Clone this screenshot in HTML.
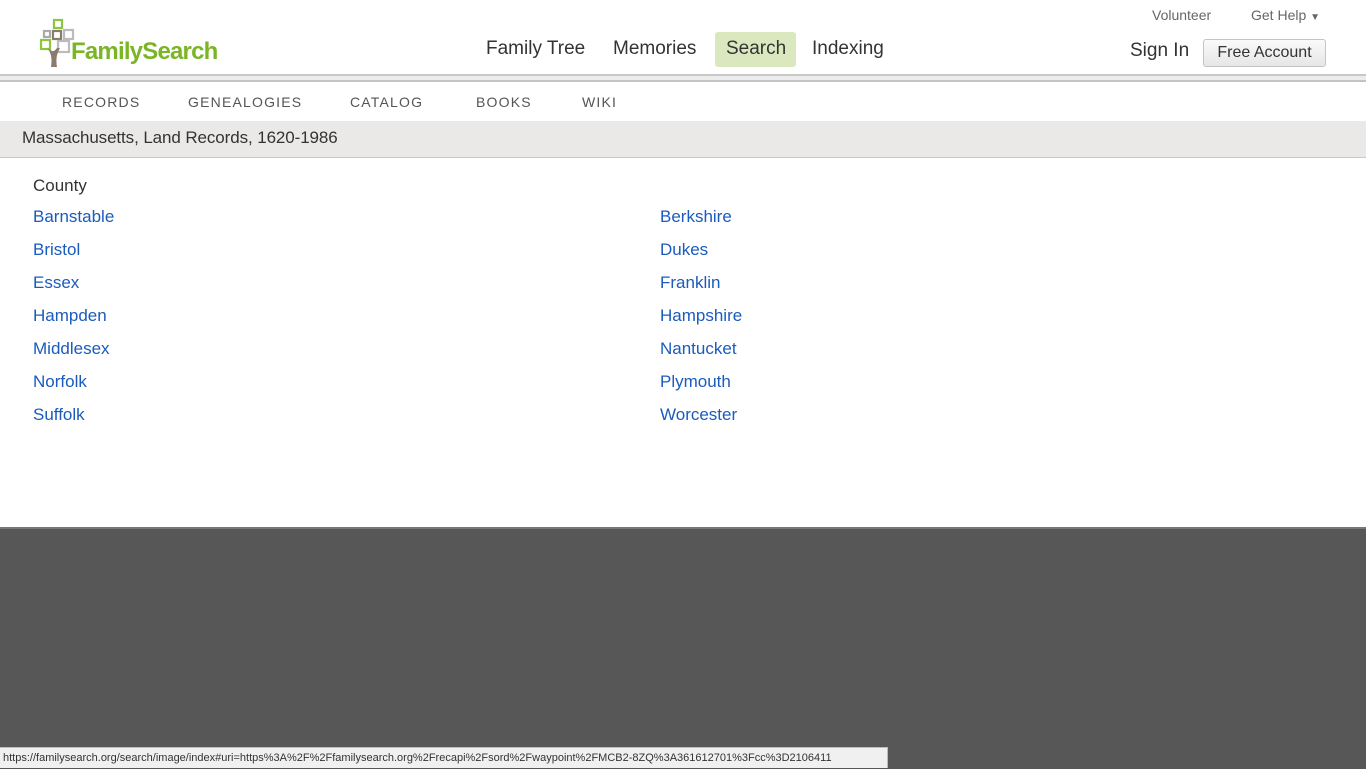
<!DOCTYPE html>
<html><head><style>
body{margin:0;width:1366px;height:768px;overflow:hidden;font-family:"Liberation Sans",sans-serif;background:#575757;position:relative}
.top{position:absolute;left:0;top:0;width:1366px;height:74px;background:#fff}
.a{position:absolute;white-space:nowrap}
.l{color:#1a5bbd;font-size:17px}
</style></head><body>
<div class="top"></div>
<div class="a" style="top:74px;left:0;width:1366px;height:2px;background:#c8c8c8"></div>
<div class="a" style="top:76px;left:0;width:1366px;height:4px;background:#ececec"></div>
<div class="a" style="top:80px;left:0;width:1366px;height:2px;background:#c4c4c4"></div>
<div class="a" style="top:82px;left:0;width:1366px;height:446px;background:#fff"></div>
<div class="a" style="top:121px;left:0;width:1366px;height:36px;background:#ebe9e7;border-bottom:1px solid #c9c9c9"></div>
<div class="a" style="top:527px;left:0;width:1366px;height:2px;background:#777"></div>
<!-- logo -->
<svg class="a" style="left:38px;top:18px" width="40" height="50" viewBox="0 0 40 50">
<rect x="16" y="2" width="8" height="8" fill="none" stroke="#8cc63f" stroke-width="2.2"/>
<rect x="6" y="13" width="6" height="6" fill="none" stroke="#aaa" stroke-width="2.2"/>
<rect x="15" y="13" width="8" height="8" fill="none" stroke="#8a7b6a" stroke-width="2.2"/>
<rect x="26" y="12" width="9" height="9" fill="none" stroke="#bbb" stroke-width="2.2"/>
<rect x="3" y="22" width="9" height="9" fill="none" stroke="#8cc63f" stroke-width="2.2"/>
<rect x="20" y="23" width="11" height="11" fill="none" stroke="#bbb" stroke-width="2.2"/>
<path d="M9 30 Q15 36 13 49 L19 49 Q17 38 22 30 L19 30 Q16 34 14 33 Z" fill="#8a7b6a"/>
</svg>
<div class="a" style="left:71px;top:38px;font-size:24px;font-weight:bold;color:#7ab526;letter-spacing:-0.8px">FamilySearch</div>
<div class="a" style="left:486px;top:38px;font-size:19px;color:#333">Family Tree</div>
<div class="a" style="left:613px;top:38px;font-size:19px;color:#333">Memories</div>
<div class="a" style="left:715px;top:32px;width:81px;height:35px;background:#dbe8bf;border-radius:3px"></div>
<div class="a" style="left:726px;top:38px;font-size:19px;color:#333">Search</div>
<div class="a" style="left:812px;top:38px;font-size:19px;color:#333">Indexing</div>
<div class="a" style="left:1152px;top:7px;font-size:14px;color:#666">Volunteer</div>
<div class="a" style="left:1251px;top:7px;font-size:14px;color:#666">Get Help <span style="font-size:10px">▼</span></div>
<div class="a" style="left:1130px;top:40px;font-size:19px;color:#333">Sign In</div>
<div class="a" style="left:1203px;top:39px;width:121px;height:26px;border:1px solid #c4c4c4;border-radius:3px;background:linear-gradient(#fafafa,#e6e6e6);font-size:16px;color:#333;text-align:center;line-height:26px">Free Account</div>
<div class="a" style="top:94px;left:62px;font-size:14px;letter-spacing:1.2px;color:#555">RECORDS</div>
<div class="a" style="top:94px;left:188px;font-size:14px;letter-spacing:1.2px;color:#555">GENEALOGIES</div>
<div class="a" style="top:94px;left:350px;font-size:14px;letter-spacing:1.2px;color:#555">CATALOG</div>
<div class="a" style="top:94px;left:476px;font-size:14px;letter-spacing:1.2px;color:#555">BOOKS</div>
<div class="a" style="top:94px;left:582px;font-size:14px;letter-spacing:1.2px;color:#555">WIKI</div>
<div class="a" style="top:128px;left:22px;font-size:17px;color:#333;letter-spacing:-0.1px">Massachusetts, Land Records, 1620-1986</div>
<div class="a" style="top:176px;left:33px;font-size:17px;color:#333">County</div>
<div class="a l" style="top:207px;left:33px">Barnstable</div><div class="a l" style="top:207px;left:660px">Berkshire</div>
<div class="a l" style="top:240px;left:33px">Bristol</div><div class="a l" style="top:240px;left:660px">Dukes</div>
<div class="a l" style="top:273px;left:33px">Essex</div><div class="a l" style="top:273px;left:660px">Franklin</div>
<div class="a l" style="top:306px;left:33px">Hampden</div><div class="a l" style="top:306px;left:660px">Hampshire</div>
<div class="a l" style="top:339px;left:33px">Middlesex</div><div class="a l" style="top:339px;left:660px">Nantucket</div>
<div class="a l" style="top:372px;left:33px">Norfolk</div><div class="a l" style="top:372px;left:660px">Plymouth</div>
<div class="a l" style="top:405px;left:33px">Suffolk</div><div class="a l" style="top:405px;left:660px">Worcester</div>
<div class="a" style="left:0;top:747px;width:888px;height:21px;background:#f0f0f0;border:1px solid #bbb;border-left:0;border-bottom:0;font-size:11px;color:#333;line-height:21px;padding-left:3px;box-sizing:border-box">https://familysearch.org/search/image/index#uri=https%3A%2F%2Ffamilysearch.org%2Frecapi%2Fsord%2Fwaypoint%2FMCB2-8ZQ%3A361612701%3Fcc%3D2106411</div>
</body></html>
